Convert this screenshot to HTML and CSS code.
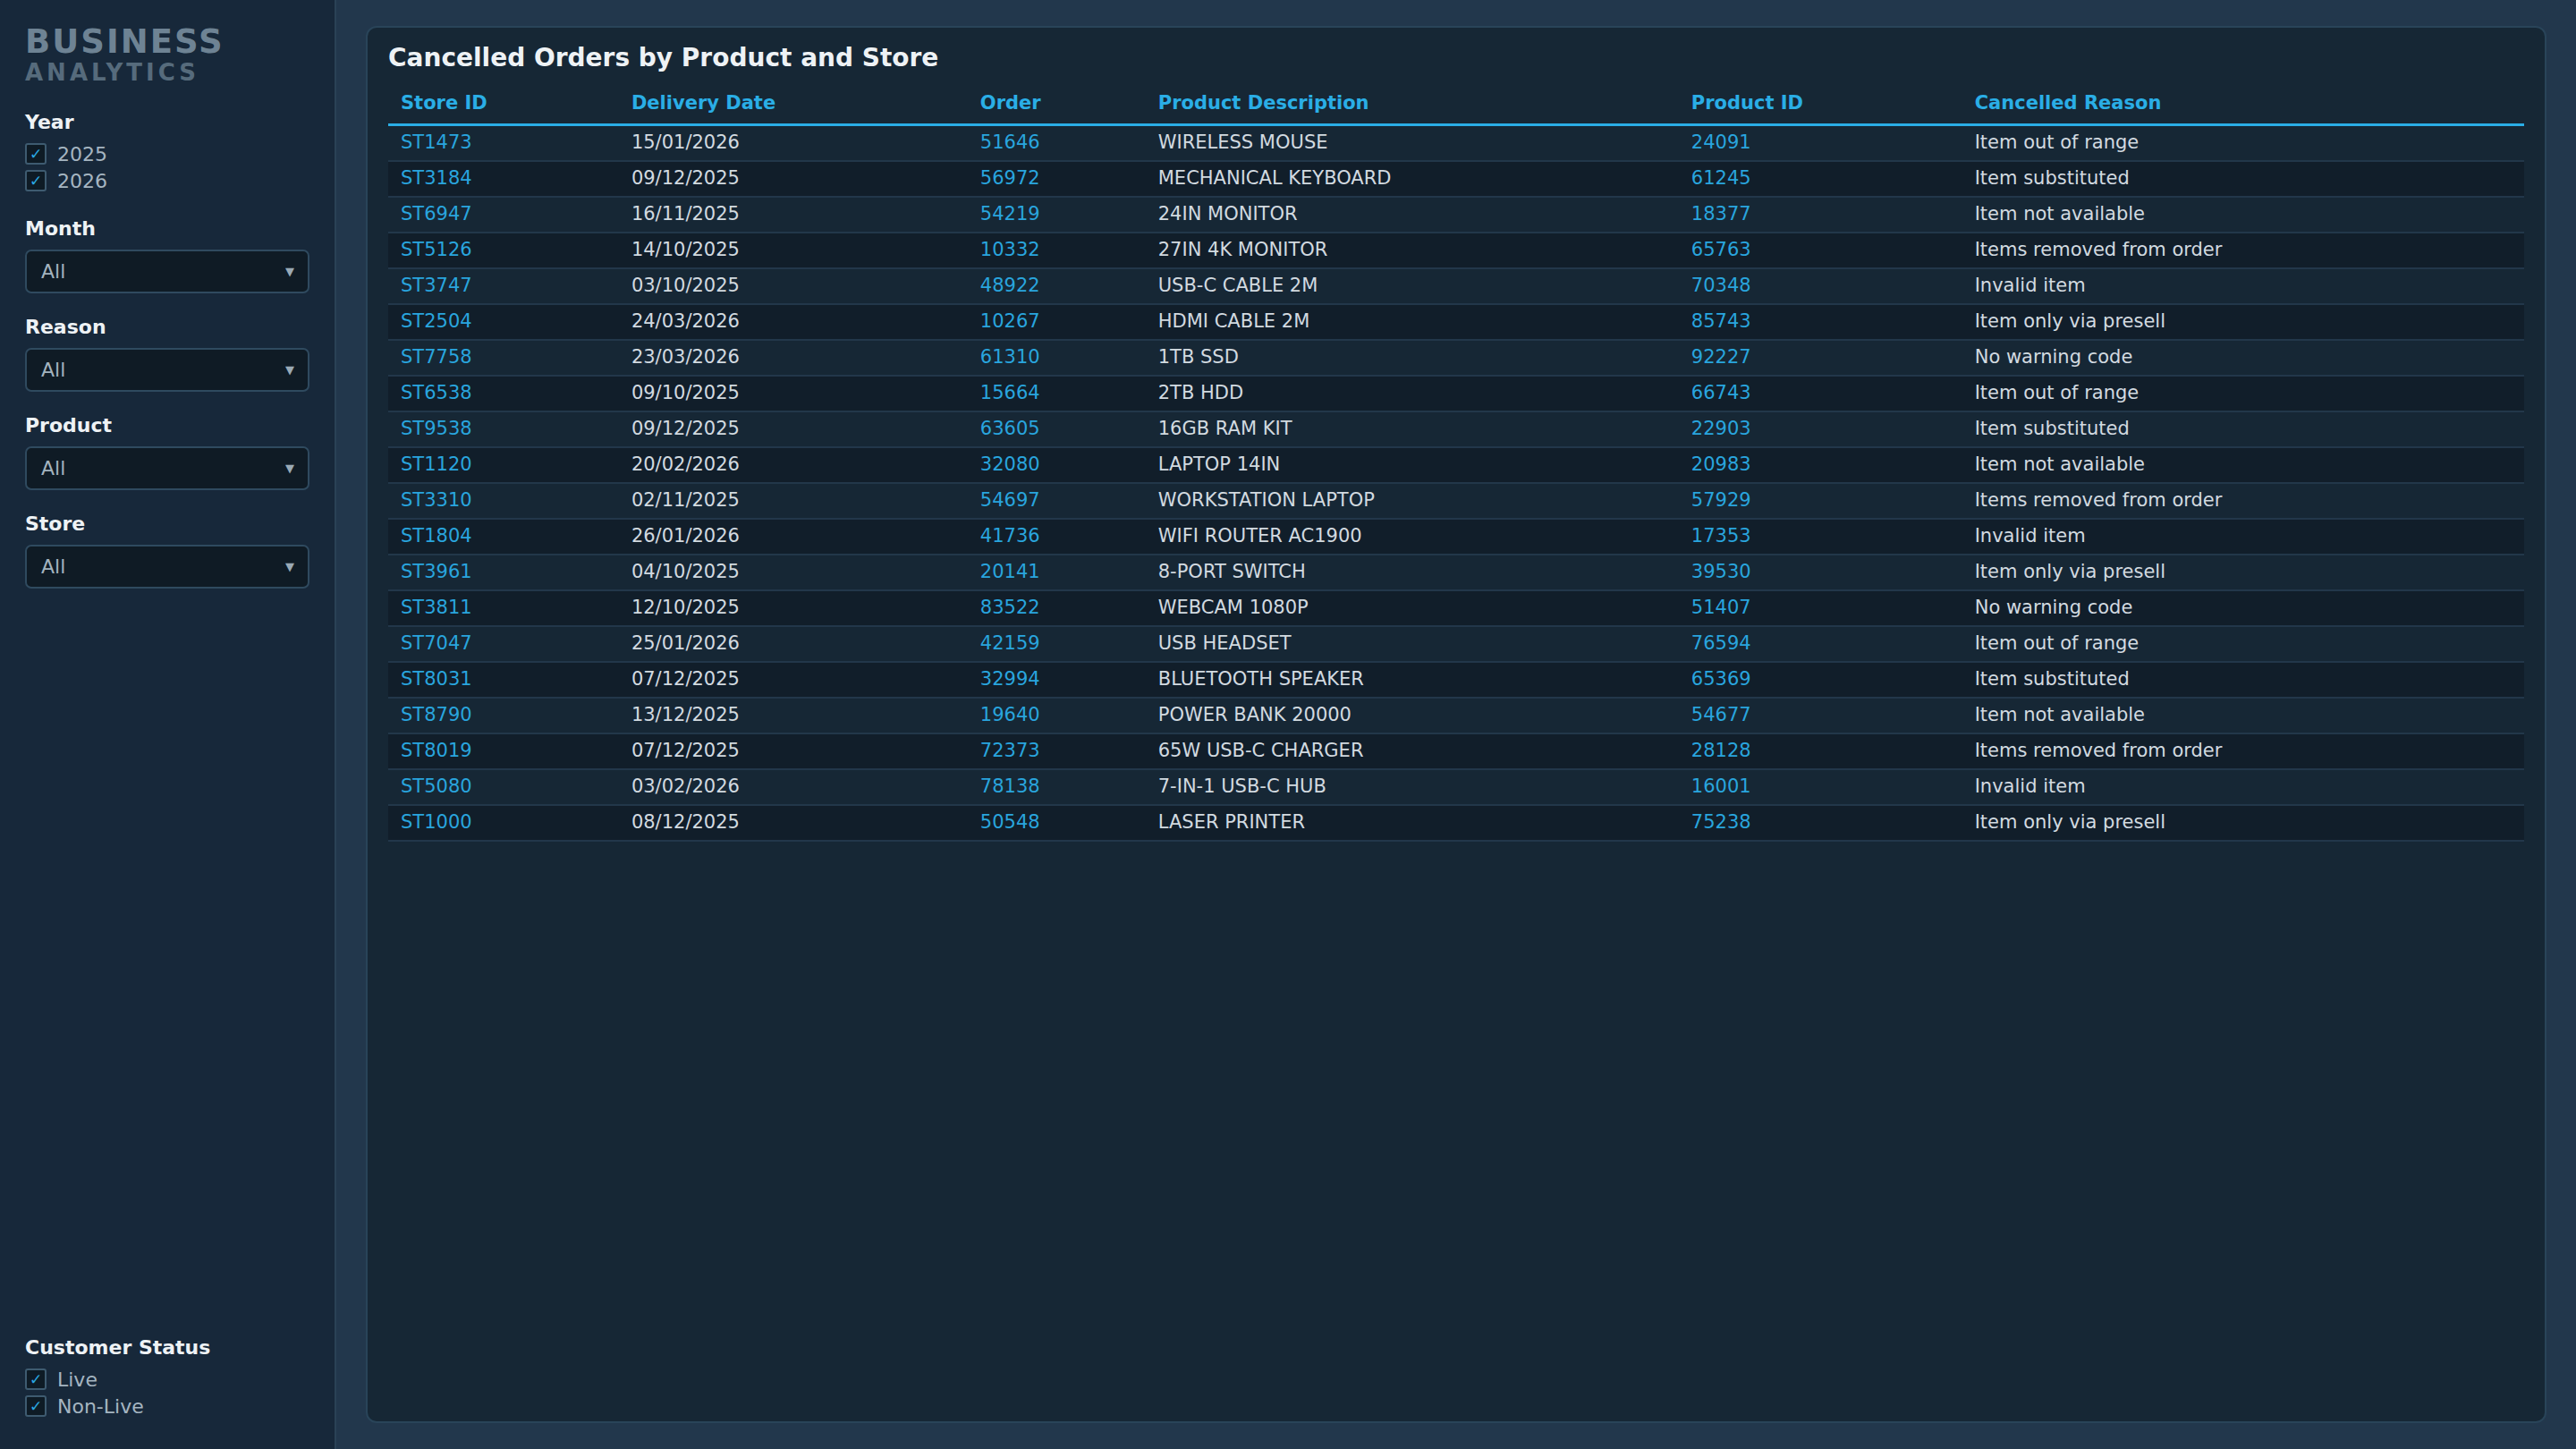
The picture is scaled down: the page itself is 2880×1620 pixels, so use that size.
FILE: index.html
```html
<!DOCTYPE html>
<html lang="en">
<head>
    <meta charset="UTF-8">
    <meta name="viewport" content="width=device-width, initial-scale=1.0">
    <title>Business Analytics - Cancelled Orders</title>
    <link rel="stylesheet" href="styles.css">
</head>
<body>
<aside class="sidebar">
    <div class="brand">
        <div class="brand-top">BUSINESS</div>
        <div class="brand-sub">ANALYTICS</div>
    </div>

    <div class="filter filter-first">
        <div class="filter-label label-list">Year</div>
        <div class="check-row"><span class="check">✓</span>2025</div>
        <div class="check-row"><span class="check">✓</span>2026</div>
    </div>

    <div class="filter">
        <div class="filter-label">Month</div>
        <div class="select"><span>All</span><span class="arrow">▼</span></div>
    </div>

    <div class="filter">
        <div class="filter-label">Reason</div>
        <div class="select"><span>All</span><span class="arrow">▼</span></div>
    </div>

    <div class="filter">
        <div class="filter-label">Product</div>
        <div class="select"><span>All</span><span class="arrow">▼</span></div>
    </div>

    <div class="filter">
        <div class="filter-label">Store</div>
        <div class="select"><span>All</span><span class="arrow">▼</span></div>
    </div>

    <div class="filter filter-bottom">
        <div class="filter-label label-list">Customer Status</div>
        <div class="check-row"><span class="check">✓</span>Live</div>
        <div class="check-row"><span class="check">✓</span>Non-Live</div>
    </div>
</aside>

<main class="main">
    <section class="panel">
        <h1 class="panel-title">Cancelled Orders by Product and Store</h1>
        <table class="orders">
            <colgroup>
                <col class="c-store">
                <col class="c-date">
                <col class="c-order">
                <col class="c-desc">
                <col class="c-pid">
                <col class="c-reason">
            </colgroup>
            <thead>
                <tr>
                    <th>Store ID</th>
                    <th>Delivery Date</th>
                    <th>Order</th>
                    <th>Product Description</th>
                    <th>Product ID</th>
                    <th>Cancelled Reason</th>
                </tr>
            </thead>
            <tbody>
                <tr><td class="id">ST1473</td><td>15/01/2026</td><td class="id">51646</td><td>WIRELESS MOUSE</td><td class="id">24091</td><td>Item out of range</td></tr>
                <tr><td class="id">ST3184</td><td>09/12/2025</td><td class="id">56972</td><td>MECHANICAL KEYBOARD</td><td class="id">61245</td><td>Item substituted</td></tr>
                <tr><td class="id">ST6947</td><td>16/11/2025</td><td class="id">54219</td><td>24IN MONITOR</td><td class="id">18377</td><td>Item not available</td></tr>
                <tr><td class="id">ST5126</td><td>14/10/2025</td><td class="id">10332</td><td>27IN 4K MONITOR</td><td class="id">65763</td><td>Items removed from order</td></tr>
                <tr><td class="id">ST3747</td><td>03/10/2025</td><td class="id">48922</td><td>USB-C CABLE 2M</td><td class="id">70348</td><td>Invalid item</td></tr>
                <tr><td class="id">ST2504</td><td>24/03/2026</td><td class="id">10267</td><td>HDMI CABLE 2M</td><td class="id">85743</td><td>Item only via presell</td></tr>
                <tr><td class="id">ST7758</td><td>23/03/2026</td><td class="id">61310</td><td>1TB SSD</td><td class="id">92227</td><td>No warning code</td></tr>
                <tr><td class="id">ST6538</td><td>09/10/2025</td><td class="id">15664</td><td>2TB HDD</td><td class="id">66743</td><td>Item out of range</td></tr>
                <tr><td class="id">ST9538</td><td>09/12/2025</td><td class="id">63605</td><td>16GB RAM KIT</td><td class="id">22903</td><td>Item substituted</td></tr>
                <tr><td class="id">ST1120</td><td>20/02/2026</td><td class="id">32080</td><td>LAPTOP 14IN</td><td class="id">20983</td><td>Item not available</td></tr>
                <tr><td class="id">ST3310</td><td>02/11/2025</td><td class="id">54697</td><td>WORKSTATION LAPTOP</td><td class="id">57929</td><td>Items removed from order</td></tr>
                <tr><td class="id">ST1804</td><td>26/01/2026</td><td class="id">41736</td><td>WIFI ROUTER AC1900</td><td class="id">17353</td><td>Invalid item</td></tr>
                <tr><td class="id">ST3961</td><td>04/10/2025</td><td class="id">20141</td><td>8-PORT SWITCH</td><td class="id">39530</td><td>Item only via presell</td></tr>
                <tr><td class="id">ST3811</td><td>12/10/2025</td><td class="id">83522</td><td>WEBCAM 1080P</td><td class="id">51407</td><td>No warning code</td></tr>
                <tr><td class="id">ST7047</td><td>25/01/2026</td><td class="id">42159</td><td>USB HEADSET</td><td class="id">76594</td><td>Item out of range</td></tr>
                <tr><td class="id">ST8031</td><td>07/12/2025</td><td class="id">32994</td><td>BLUETOOTH SPEAKER</td><td class="id">65369</td><td>Item substituted</td></tr>
                <tr><td class="id">ST8790</td><td>13/12/2025</td><td class="id">19640</td><td>POWER BANK 20000</td><td class="id">54677</td><td>Item not available</td></tr>
                <tr><td class="id">ST8019</td><td>07/12/2025</td><td class="id">72373</td><td>65W USB-C CHARGER</td><td class="id">28128</td><td>Items removed from order</td></tr>
                <tr><td class="id">ST5080</td><td>03/02/2026</td><td class="id">78138</td><td>7-IN-1 USB-C HUB</td><td class="id">16001</td><td>Invalid item</td></tr>
                <tr><td class="id">ST1000</td><td>08/12/2025</td><td class="id">50548</td><td>LASER PRINTER</td><td class="id">75238</td><td>Item only via presell</td></tr>
            </tbody>
        </table>
    </section>
</main>
</body>
</html>
```

FILE: styles.css
```css
/* layout geral */
html, body {
    height: 100%;
}
body {
    margin: 0;
    font-family: "DejaVu Sans", "Liberation Sans", sans-serif;
    background-color: #22374c;
    color: #d2dae0;
    display: flex;
    overflow: hidden;
}

/* barra lateral */
.sidebar {
    width: 376px;
    flex-shrink: 0;
    background-color: #17283a;
    border-right: 2px solid #2a4256;
    padding: 28px 28px 33px;
    box-sizing: border-box;
    display: flex;
    flex-direction: column;
}
.brand-top {
    font-size: 37px;
    line-height: 37px;
    font-weight: bold;
    letter-spacing: 2px;
    color: #6e8394;
}
.brand-sub {
    margin-top: 3px;
    font-size: 26px;
    line-height: 26px;
    font-weight: bold;
    letter-spacing: 4px;
    color: #566b7c;
}
.filter {
    margin-top: 25px;
}
.filter-first {
    margin-top: 30px;
    margin-bottom: 1px;
}
.filter-bottom {
    margin-top: auto;
}
.filter-label {
    font-size: 22px;
    line-height: 26px;
    font-weight: bold;
    color: #eef2f5;
    margin-bottom: 10px;
}
.label-list {
    margin-bottom: 7px;
}
.check-row {
    height: 30px;
    display: flex;
    align-items: center;
    gap: 12px;
    font-size: 22px;
    color: #a5b5c1;
}
.check {
    width: 20px;
    height: 20px;
    border: 2px solid #3e5b70;
    border-radius: 3px;
    background-color: #0e1b25;
    color: #2aa8e2;
    font-size: 17px;
    line-height: 20px;
    text-align: center;
}
.select {
    height: 49px;
    box-sizing: border-box;
    border: 2px solid #2f4a5f;
    border-radius: 7px;
    background-color: #0f1b25;
    padding: 0 15px 0 16px;
    display: flex;
    align-items: center;
    justify-content: space-between;
    font-size: 22px;
    color: #a3b3bf;
}
.select .arrow {
    font-size: 13px;
    color: #9aaab6;
}

/* painel principal */
.main {
    flex: 1;
    padding: 29px 33px;
    display: flex;
    min-width: 0;
}
.panel {
    flex: 1;
    background-color: #162735;
    border: 2px solid #294459;
    border-radius: 12px;
    padding: 17px 23px;
}
.panel-title {
    margin: 0 0 11px;
    font-size: 28px;
    line-height: 34px;
    font-weight: bold;
    color: #eef2f5;
}

/* tabela */
.orders {
    width: 100%;
    border-collapse: separate;
    border-spacing: 0;
    table-layout: fixed;
    font-size: 21px;
}
.c-store { width: 10.8%; }
.c-date { width: 16.33%; }
.c-order { width: 8.33%; }
.c-desc { width: 24.96%; }
.c-pid { width: 13.27%; }
.c-reason { width: 26.31%; }
.orders th {
    text-align: left;
    color: #2aaee6;
    font-weight: bold;
    line-height: 25px;
    padding: 10px 14px 10px;
    border-bottom: 3px solid #2aaee6;
    white-space: nowrap;
}
.orders td {
    line-height: 25px;
    padding: 6px 14px 7px;
    border-bottom: 2px solid #22374a;
    color: #d2dae0;
    white-space: nowrap;
}
.orders td.id {
    color: #29a5de;
}
.orders tbody tr:nth-child(even) {
    background-color: #111e2a;
}
```
